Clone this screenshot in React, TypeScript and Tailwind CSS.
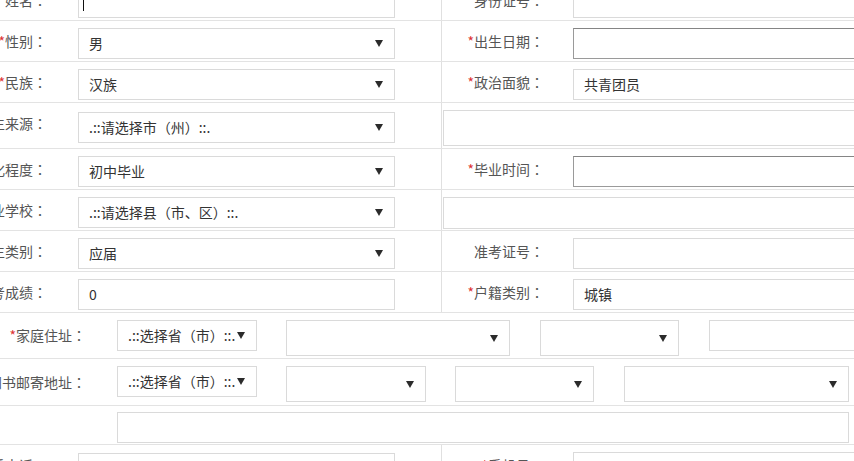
import type { ReactNode } from "react"

function Arrow() {
  return (
    <svg width="8" height="7" viewBox="0 0 8 7" className="shrink-0">
      <polygon points="0,0 8,0 4,7" fill="#2b2b2b" />
    </svg>
  )
}

// the colon sits centred in the TC face, the way the reference draws it
function Label({ text, star, className }: { text: string; star?: boolean; className: string }) {
  return (
    <div className={`flex shrink-0 items-center justify-end whitespace-nowrap text-[14px] text-[#555] ${className}`}>
      {star && <span className="text-[#d33]">*</span>}
      <span>{text}</span>
      {text && <span className="font-['Noto_Sans_CJK_TC',sans-serif]">：</span>}
    </div>
  )
}

function Box({
  children,
  className = "",
  dark,
}: {
  children?: ReactNode
  className?: string
  dark?: boolean
}) {
  return (
    <div
      className={`flex shrink-0 items-center justify-between whitespace-nowrap border bg-white text-[14px] text-[#333] ${
        dark ? "border-[#9a9a9a]" : "border-[#dadada]"
      } ${className}`}
    >
      {children}
    </div>
  )
}

function Select({ value, className = "" }: { value?: string; className?: string }) {
  return (
    <Box className={`pl-[10px] pr-[11px] ${className}`}>
      <span>{value}</span>
      <Arrow />
    </Box>
  )
}

type Right =
  | { kind: "input"; label: string; star?: boolean; value?: string; dark?: boolean }
  | { kind: "wide"; h: string }

function FormRow({
  label,
  star,
  left,
  right,
  h = "h-[41px]",
  pt = "pt-[7px]",
}: {
  label: string
  star?: boolean
  left: ReactNode
  right: Right
  h?: string
  pt?: string
}) {
  return (
    <div className={`flex border-b border-[#e3e3e3] ${h}`}>
      <div className="flex w-[441px] shrink-0">
        <Label text={label} star={star} className="h-[40px] w-[78px] pr-[31px] pt-[1px]" />
        <div className={pt}>{left}</div>
      </div>
      <div className="flex flex-1 border-l border-[#e0e0e0]">
        {right.kind === "input" ? (
          <>
            <Label text={right.label} star={right.star} className="h-[40px] w-[131px] pr-[29px] pt-[1px]" />
            <div className="pt-[7px]">
              <Box dark={right.dark} className={`h-[31px] w-[320px] px-[10px] ${right.dark ? "border-t-[#858585]" : ""}`}>
                <span>{right.value}</span>
              </Box>
            </div>
          </>
        ) : (
          <div className="pl-[1px] pt-[7px]">
            <Box className={`w-[460px] ${right.h}`} />
          </div>
        )}
      </div>
    </div>
  )
}

function AddrRow({ label, star, h, pt = "pt-[7px]", children }: { label: string; star?: boolean; h: string; pt?: string; children: ReactNode }) {
  return (
    <div className={`flex border-b border-[#e3e3e3] ${h}`}>
      <Label text={label} star={star} className="h-full w-[117px] pr-[31px]" />
      <div className={`flex items-start ${pt}`}>{children}</div>
    </div>
  )
}

export default function App() {
  return (
    <div className="h-[461px] w-full overflow-hidden bg-white font-['Microsoft_YaHei','Noto_Sans_CJK_SC',sans-serif]">
      <div className="-mt-[20px] w-[1000px]">
        <FormRow
          label="姓名"
          star
          left={
            <Box className="h-[31px] w-[317px] pl-[4px]">
              <span className="h-[16px] w-px bg-[#111]" />
            </Box>
          }
          right={{ kind: "input", label: "身份证号" }}
        />
        <FormRow
          label="性别"
          star
          left={<Select value="男" className="h-[31px] w-[317px]" />}
          right={{ kind: "input", label: "出生日期", star: true, dark: true }}
        />
        <FormRow
          label="民族"
          star
          left={<Select value="汉族" className="h-[31px] w-[317px]" />}
          right={{ kind: "input", label: "政治面貌", star: true, value: "共青团员" }}
        />
        <FormRow
          label="学生来源"
          star
          h="h-[46px]"
          pt="pt-[9px]"
          left={<Select value=".::请选择市（州）::." className="h-[31px] w-[317px]" />}
          right={{ kind: "wide", h: "h-[36px]" }}
        />
        <FormRow
          label="文化程度"
          star
          left={<Select value="初中毕业" className="h-[31px] w-[317px]" />}
          right={{ kind: "input", label: "毕业时间", star: true, dark: true }}
        />
        <FormRow
          label="毕业学校"
          star
          left={<Select value=".::请选择县（市、区）::." className="h-[31px] w-[317px]" />}
          right={{ kind: "wide", h: "h-[32px]" }}
        />
        <FormRow
          label="考生类别"
          star
          left={<Select value="应届" className="h-[31px] w-[317px]" />}
          right={{ kind: "input", label: "准考证号" }}
        />
        <FormRow
          label="中考成绩"
          left={
            <Box className="h-[31px] w-[317px] px-[10px]">
              <span>0</span>
            </Box>
          }
          right={{ kind: "input", label: "户籍类别", star: true, value: "城镇" }}
        />

        <AddrRow label="家庭住址" star h="h-[46px]">
          <Select value=".::选择省（市）::." className="h-[31px] w-[140px] pr-[10px]" />
          <Select className="ml-[29px] h-[36px] w-[224px]" />
          <Select className="ml-[30px] h-[36px] w-[139px]" />
          <Box className="ml-[30px] h-[31px] w-[200px]" />
        </AddrRow>
        <AddrRow label="通知书邮寄地址" h="h-[47px]">
          <Select value=".::选择省（市）::." className="h-[31px] w-[140px] pr-[10px]" />
          <Select className="ml-[29px] h-[36px] w-[140px]" />
          <Select className="ml-[29px] h-[36px] w-[139px]" />
          <Select className="ml-[30px] h-[36px] w-[225px]" />
        </AddrRow>
        <AddrRow label="" h="h-[39px]" pt="pt-[6px]">
          <Box className="h-[31px] w-[732px]" />
        </AddrRow>

        <FormRow
          label="联系电话"
          star
          pt="pt-[8px]"
          left={<Box className="h-[31px] w-[317px]" />}
          right={{ kind: "input", label: "手机号", star: true }}
        />
      </div>
    </div>
  )
}
